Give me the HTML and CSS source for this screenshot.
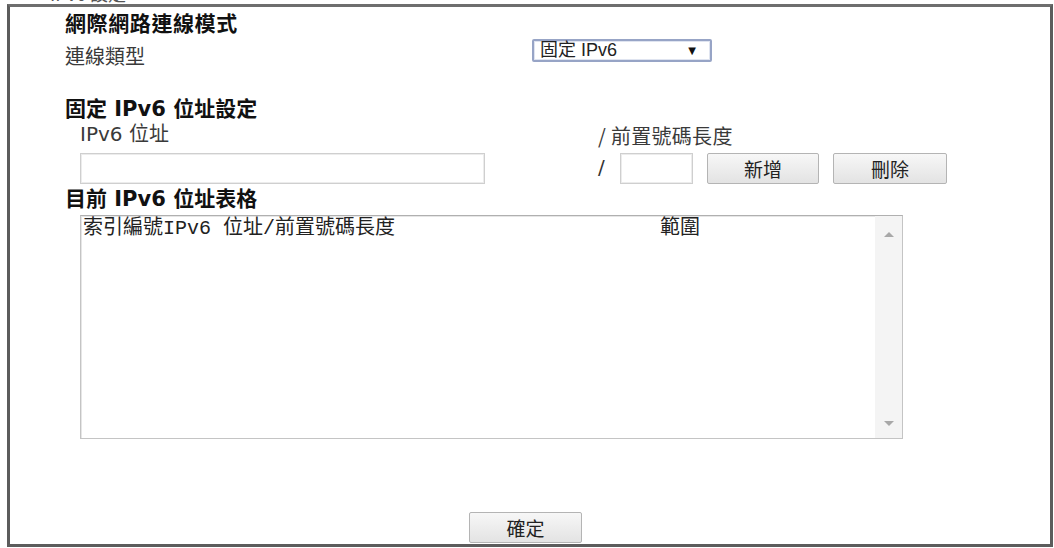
FILE: index.html
```html
<!DOCTYPE html>
<html lang="zh-Hant">
<head>
<meta charset="utf-8">
<title>IPv6</title>
<link rel="stylesheet" href="styles.css">
</head>
<body>
<div class="caption"><span>IPv6 設定</span></div>
<div class="frame">
  <div class="heading h1">網際網路連線模式</div>
  <div class="row-type">
    <div class="label type-label">連線類型</div>
    <div class="select">
      <span class="select-text">固定 IPv6</span>
      <span class="select-arrow">▼</span>
    </div>
  </div>
  <div class="heading h2">固定 IPv6 位址設定</div>
  <div class="row-labels">
    <div class="label addr-label">IPv6 位址</div>
    <div class="label prefix-label">/ 前置號碼長度</div>
  </div>
  <div class="row-inputs">
    <div class="input addr-input"></div>
    <div class="prefix-group">
      <span class="slash">/</span>
      <div class="input prefix-input"></div>
      <div class="btn btn-add">新增</div>
      <div class="btn btn-del">刪除</div>
    </div>
  </div>
  <div class="heading h3">目前 IPv6 位址表格</div>
  <div class="table-box">
    <div class="table-content">
      <div class="table-row">
        <span class="col-a">索引編號IPv6 位址/前置號碼長度</span>
        <span class="col-b">範圍</span>
      </div>
    </div>
    <div class="scrollbar">
      <span class="arrow up"></span>
      <span class="arrow down"></span>
    </div>
  </div>
  <div class="row-ok">
    <div class="btn btn-ok">確定</div>
  </div>
</div>
</body>
</html>
```
FILE: styles.css
```css
html, body {
  margin: 0;
  padding: 0;
  background: #ffffff;
  overflow: hidden;
}
body {
  width: 1054px;
  height: 548px;
  font-family: "DejaVu Sans", "Noto Sans CJK TC", sans-serif;
  color: #333;
}
.caption {
  height: 4px;
  overflow: hidden;
  padding-left: 50px;
}
.caption span {
  display: block;
  margin-top: -17px;
  font-size: 18px;
  line-height: 20px;
  color: #555;
  font-family: "Noto Sans CJK TC", sans-serif;
}
.frame {
  margin-left: 7px;
  width: 1040px;
  height: 532px;
  border: 3px solid #5c5c5c;
  border-top-color: #6e6e6e;
  padding: 5px 0 0 0;
  box-sizing: content-box;
  display: flex;
  flex-direction: column;
}
.heading {
  font-family: "DejaVu Sans", "Noto Sans CJK TC", sans-serif;
  font-weight: bold;
  font-size: 21px;
  line-height: 24px;
  height: 24px;
  color: #111;
  margin-left: 55px;
  white-space: nowrap;
}
.h1 { letter-spacing: 0.6px; }
.label {
  font-size: 20px;
  line-height: 24px;
  color: #3a3a3a;
  white-space: nowrap;
}
.row-type {
  display: flex;
  margin-top: 3px;
  height: 58px;
  align-items: flex-start;
}
.type-label {
  width: 467px;
  margin-left: 55px;
  margin-top: 5px;
  font-family: "Noto Sans CJK TC", sans-serif;
}
.select {
  height: 19px;
  border: 2px solid #97a4c6;
  border-radius: 2px;
  box-shadow: inset 0 0 0 1px #dfe4f0;
  display: flex;
  align-items: center;
  justify-content: space-between;
  padding: 0 14px 0 6px;
  box-sizing: content-box;
  width: 156px;
  background: #fff;
}
.select-text {
  font-family: "Liberation Sans", "Noto Sans CJK TC", sans-serif;
  font-size: 18px;
  line-height: 19px;
  color: #222;
}
.select-arrow {
  font-size: 10px;
  color: #111;
  line-height: 19px;
}
.row-labels {
  display: flex;
  height: 31px;
  margin-top: 1px;
  align-items: flex-start;
}
.addr-label {
  width: 518px;
  margin-left: 70px;
}
.prefix-label {
  margin-top: 2px;
  font-family: "Noto Sans CJK TC", sans-serif;
  letter-spacing: 0.3px;
}
.row-inputs {
  display: flex;
  height: 32px;
}
.input {
  border: 1px solid #cfcfcf;
  box-shadow: inset 0 0 0 1px #ececec;
  background: #fff;
  box-sizing: border-box;
}
.addr-input {
  margin-left: 70px;
  width: 405px;
  height: 31px;
}
.prefix-group {
  margin-left: 113px;
  display: flex;
  align-items: flex-start;
}
.slash {
  font-size: 20px;
  line-height: 28px;
  width: 22px;
  color: #333;
}
.prefix-input {
  width: 73px;
  height: 31px;
}
.btn {
  height: 31px;
  box-sizing: border-box;
  border: 1px solid #b4b4b4;
  border-radius: 2px;
  background: linear-gradient(#f7f7f7, #e3e3e3);
  font-family: "Noto Sans CJK TC", sans-serif;
  font-size: 19px;
  line-height: 29px;
  text-align: center;
  color: #222;
}
.btn-add {
  margin-left: 14px;
  width: 112px;
}
.btn-del {
  margin-left: 14px;
  width: 114px;
}
.h3 {
  margin-top: 2px;
}
.table-box {
  margin-top: 4px;
  margin-left: 70px;
  width: 823px;
  height: 224px;
  box-sizing: border-box;
  border: 1px solid #c4c4c4;
  border-top-color: #b0b0b0;
  box-shadow: inset 1px 1px 0 #e6e6e6;
  display: flex;
}
.table-content {
  flex: 1;
  padding: 1px 0 0 2px;
}
.table-row {
  display: flex;
  font-family: "Liberation Mono", "Noto Sans CJK TC", monospace;
  font-size: 20px;
  line-height: 24px;
  color: #222;
  white-space: nowrap;
}
.col-a {
  width: 577px;
}
.col-b {
  color: #222;
}
.scrollbar {
  width: 27px;
  background: #f4f4f4;
  display: flex;
  flex-direction: column;
  justify-content: space-between;
  align-items: center;
  padding: 16px 0 12px 0;
}
.arrow {
  width: 0;
  height: 0;
  border-left: 5px solid transparent;
  border-right: 5px solid transparent;
}
.arrow.up {
  border-bottom: 5px solid #a8a8a8;
}
.arrow.down {
  border-top: 5px solid #a8a8a8;
}
.row-ok {
  margin-top: 73px;
  display: flex;
}
.btn-ok {
  margin-left: 459px;
  width: 113px;
  font-size: 19px;
}
```
